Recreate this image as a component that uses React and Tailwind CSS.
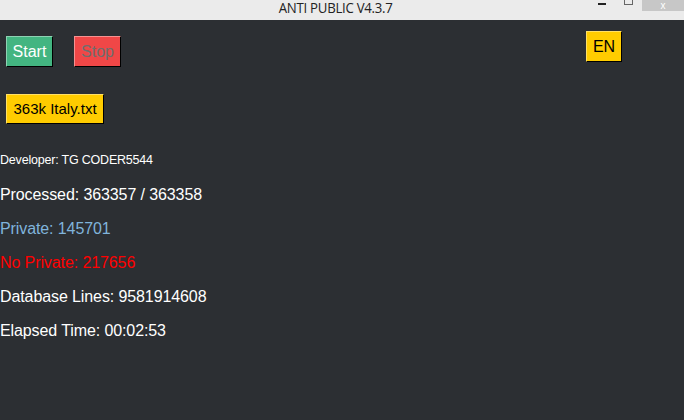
import React from "react";

// Bouton façon Tk (relief "raised")
const TkButton = ({ children, className = "" }) => (
  <div
    className={`flex items-center justify-center border border-t-white/40 border-l-white/40 border-b-black border-r-black ${className}`}
  >
    {children}
  </div>
);

const stats = [
  { label: "Processed: 363357 / 363358", color: "text-white" },
  { label: "Private: 145701", color: "text-[#80b4dc]" },
  { label: "No Private: 217656", color: "text-[#ff0000]" },
  { label: "Database Lines: 9581914608", color: "text-white" },
  { label: "Elapsed Time: 00:02:53", color: "text-white" },
];

export default function App() {
  return (
    <div
      className="w-[684px] h-[420px] flex flex-col bg-[#2c2f33] overflow-hidden"
      style={{ fontFamily: '"Liberation Sans", Arial, sans-serif' }}
    >
      {/* Barre de titre */}
      <div className="relative h-[20px] bg-[#ebebeb] flex justify-center pr-[12px]">
        <span
          className="text-[15px] leading-[14px] text-[#222] tracking-[-0.3px]"
          style={{ fontFamily: '"Open Sans", "Liberation Sans", sans-serif', transform: "scaleX(0.88)" }}
        >
          ANTI PUBLIC V4.3.7
        </span>
        <div className="absolute left-[598px] top-[3px] w-[8px] h-[2px] bg-[#222]" />
        <div className="absolute left-[624px] -top-[4px] w-[9px] h-[9px] border border-[#666]" />
        <div className="absolute left-[642px] top-0 w-[42px] h-[11px] bg-[#c7c7c7] flex justify-center items-center">
          <span className="text-white text-[10px] leading-[10px]">x</span>
        </div>
      </div>

      {/* Contenu */}
      <div className="relative flex-1 flex flex-col">
        <div className="flex gap-[21px] pl-[6px] pt-[16px]">
          <TkButton className="w-[47px] h-[31px] bg-[#43b581] text-white text-[16px]">Start</TkButton>
          <TkButton className="w-[47px] h-[31px] bg-[#f04747] text-[#6e6e6e] text-[16px]">Stop</TkButton>
        </div>

        <div className="absolute left-[586px] top-[11px]">
          <TkButton className="w-[36px] h-[31px] bg-[#ffcc00] text-black text-[16px]">EN</TkButton>
        </div>

        <div className="pl-[6px] pt-[27px]">
          <TkButton className="w-[98px] h-[30px] bg-[#ffcc00] text-black text-[15px]">363k Italy.txt</TkButton>
        </div>

        <div className="pt-[29px] text-white text-[12.5px] leading-[14px] tracking-[-0.2px]">Developer: TG CODER5544</div>

        <div className="flex flex-col gap-[15px] pt-[18px]">
          {stats.map((s) => (
            <div key={s.label} className={`${s.color} text-[16px] leading-[19px] tracking-[-0.1px]`}>
              {s.label}
            </div>
          ))}
        </div>
      </div>
    </div>
  );
}
